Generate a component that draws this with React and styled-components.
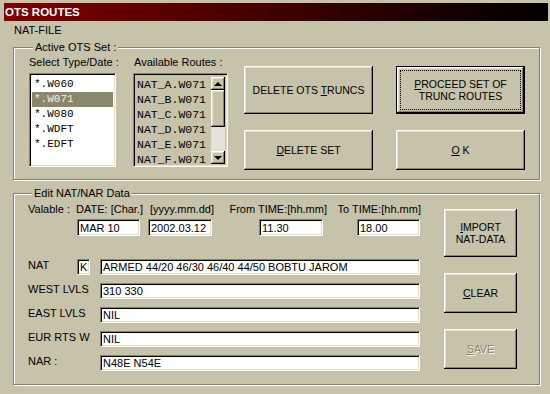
import { Fragment } from 'react'
import styled, { createGlobalStyle } from 'styled-components'

const FACE = '#c6c3aa'
const SHADOW = '#86836c'
const LIGHT = '#e2dfcd'
const UI_FONT = '"Liberation Sans", Arial, sans-serif'

const GlobalStyle = createGlobalStyle`
  * { box-sizing: border-box; }
  body {
    margin: 0;
    background: ${FACE};
    font-family: ${UI_FONT};
  }
`

const Window = styled.div`
  width: 550px;
  height: 394px;
  padding: 3px 2px 0 4px;
  background: ${FACE};
  font-family: ${UI_FONT};
  font-size: 11px;
  color: #000;
`

const TitleBar = styled.div`
  height: 18px;
  display: flex;
  align-items: center;
  padding-left: 1px;
  background: linear-gradient(90deg, #800000, #000);
  color: #fff;
  font: bold 11.5px 'Liberation Sans', Arial, sans-serif;
`

const Body = styled.div`
  padding: 0 7px 0 9px;
`

const Caption = styled.div`
  height: 15px;
  line-height: 15px;
  margin: 2px 0 2px 1px;
`

const GroupBox = styled.fieldset`
  margin: 0 1px 0 0;
  min-width: 0;
  border: 1px solid ${SHADOW};
  box-shadow: inset 1px 1px #fff, 1px 1px #fff;
`

const Legend = styled.legend`
  margin-left: 4px;
  padding: 0 2px;
  line-height: 15px;
  background: ${FACE};
`

const ActiveSet = styled(GroupBox)`
  display: flex;
  align-items: flex-start;
  padding: 0 0 9px 15px;
`

const EditSet = styled(GroupBox)`
  display: flex;
  align-items: flex-start;
  margin-top: 6px;
  padding: 0 0 13px 14px;
`

const ListColumn = styled.div`
  display: flex;
  flex-direction: column;
  width: ${(p) => p.$w}px;
  margin-right: ${(p) => p.$gap || 0}px;
`

const FieldLabel = styled.div`
  height: 15px;
  line-height: 15px;
  margin-bottom: 3px;
  white-space: nowrap;
  padding-left: ${(p) => p.$indent || 0}px;
`

const sunken = `
  border: 1px solid;
  border-color: ${SHADOW} #fff #fff ${SHADOW};
  box-shadow: inset 1px 1px #000, inset -1px -1px ${LIGHT};
`

const ListBox = styled.div`
  ${sunken}
  height: 94px;
  padding: 2px;
  display: flex;
  background: ${(p) => (p.$white ? '#fff' : FACE)};
  font-family: 'Liberation Mono', 'Courier New', monospace;
  font-size: ${(p) => p.$size || 11.5}px;
`

const ListItems = styled.ul`
  flex: 1;
  list-style: none;
  margin: 0;
  padding: 1px 0 0;
`

const ListItem = styled.li`
  height: 15px;
  line-height: 15px;
  padding-left: ${(p) => p.$indent || 2}px;
  white-space: nowrap;
  background: ${(p) => (p.$selected ? '#8b876a' : 'transparent')};
  color: ${(p) => (p.$selected ? '#f2f0e6' : '#000')};
`

const raised = `
  box-shadow: inset -1px -1px #000, inset 1px 1px #fff,
    inset -2px -2px ${SHADOW}, inset 2px 2px ${LIGHT};
`

const ScrollBar = styled.div`
  width: 14px;
  display: flex;
  flex-direction: column;
  padding-top: 1px;
`

const ScrollButton = styled.div`
  ${raised}
  height: 13px;
  background: ${FACE};
  display: flex;
  align-items: center;
  justify-content: center;
`

const Arrow = styled.span`
  width: 0;
  height: 0;
  border-left: 4px solid transparent;
  border-right: 4px solid transparent;
  ${(p) => (p.$down ? 'border-top' : 'border-bottom')}: 4px solid #000;
`

const ScrollThumb = styled.div`
  ${raised}
  height: 37px;
  background: ${FACE};
`

const ScrollTrack = styled.div`
  flex: 1;
  background: #e4e2d6;
`

const ButtonGrid = styled.div`
  display: grid;
  grid-template-columns: 129px 129px;
  grid-template-rows: 48px 40px;
  column-gap: 23px;
  row-gap: 16px;
  margin: 11px 0 0 16px;
`

const Button = styled.button`
  position: relative;
  height: ${(p) => p.$h || 40}px;
  padding: 0 4px;
  border: ${(p) => (p.$default ? '1px solid #000' : 'none')};
  background: ${FACE};
  ${raised}
  font-family: ${UI_FONT};
  font-size: 10.5px;
  line-height: 12px;
  color: ${(p) => (p.$disabled ? SHADOW : '#000')};
  text-shadow: ${(p) => (p.$disabled ? '1px 1px #fff' : 'none')};
  text-transform: uppercase;
  cursor: default;

  &::after {
    content: '';
    display: ${(p) => (p.$default ? 'block' : 'none')};
    position: absolute;
    inset: 3px;
    border: 1px dotted #000;
  }

  u {
    text-decoration-thickness: 1px;
    text-underline-offset: 1px;
  }
`

const FormArea = styled.div`
  display: flex;
  flex-direction: column;
  width: 393px;
`

const DateGrid = styled.div`
  display: grid;
  grid-template-columns: 48px 72px 68px 111px 94px;
  grid-template-rows: 15px 17px;
  row-gap: 2px;
  margin-top: 1px;
`

const HeadLabel = styled.div`
  line-height: 15px;
  white-space: nowrap;
  text-align: ${(p) => p.$align || 'left'};
  padding-left: ${(p) => p.$indent || 0}px;
`

const Field = styled.input`
  ${sunken}
  width: ${(p) => p.$w}px;
  height: ${(p) => p.$h || 16}px;
  margin: 0 ${(p) => p.$right || 0}px 0 ${(p) => p.$left || 0}px;
  justify-self: ${(p) => p.$justify || 'start'};
  padding: 0 1px 0 2px;
  background: #fff;
  font-family: ${UI_FONT};
  font-size: 11px;
  color: #000;
  outline: none;
`

const DataGrid = styled.div`
  display: grid;
  grid-template-columns: 49px 23px 320px;
  grid-auto-rows: 16px;
  row-gap: 8px;
  margin-top: 23px;
`

const RowLabel = styled.div`
  grid-column: ${(p) => (p.$span ? '1 / 3' : '1')};
  line-height: 13px;
  white-space: nowrap;
`

const SideButtons = styled.div`
  display: flex;
  flex-direction: column;
  gap: 16px;
  width: 73px;
  margin: 8px 0 0 23px;
`

const types = ['*.W060', '*.W071', '*.W080', '*.WDFT', '*.EDFT']
const routes = ['A', 'B', 'C', 'D', 'E', 'F'].map((l) => `NAT_${l}.W071`)

const levels = [
  { label: 'WEST LVLS', value: '310 330' },
  { label: 'EAST LVLS', value: 'NIL' },
  { label: 'EUR RTS W', value: 'NIL' },
  { label: 'NAR :', value: 'N48E N54E' },
]

export default function App() {
  return (
    <>
      <GlobalStyle />
      <Window>
        <TitleBar>OTS ROUTES</TitleBar>
        <Body>
          <Caption>NAT-FILE</Caption>

          <ActiveSet>
            <Legend>Active OTS Set :</Legend>
            <ListColumn $w={87} $gap={17}>
              <FieldLabel>Select Type/Date :</FieldLabel>
              <ListBox $white $size={11}>
                <ListItems>
                  {types.map((t) => (
                    <ListItem key={t} $selected={t === '*.W071'}>
                      {t}
                    </ListItem>
                  ))}
                </ListItems>
              </ListBox>
            </ListColumn>
            <ListColumn $w={95}>
              <FieldLabel $indent={1}>Available Routes :</FieldLabel>
              <ListBox>
                <ListItems>
                  {routes.map((r) => (
                    <ListItem key={r} $indent={1}>
                      {r}
                    </ListItem>
                  ))}
                </ListItems>
                <ScrollBar>
                  <ScrollButton>
                    <Arrow />
                  </ScrollButton>
                  <ScrollThumb />
                  <ScrollTrack />
                  <ScrollButton>
                    <Arrow $down />
                  </ScrollButton>
                </ScrollBar>
              </ListBox>
            </ListColumn>
            <ButtonGrid>
              <Button $h={48}>
                DELETE OTS <u>T</u>RUNCS
              </Button>
              <Button $h={48} $default>
                <u>P</u>ROCEED SET OF
                <br />
                TRUNC ROUTES
              </Button>
              <Button>
                <u>D</u>ELETE SET
              </Button>
              <Button>
                <u>O</u>&nbsp;K
              </Button>
            </ButtonGrid>
          </ActiveSet>

          <EditSet>
            <Legend>Edit NAT/NAR Data</Legend>
            <FormArea>
              <DateGrid>
                <HeadLabel>Valable :</HeadLabel>
                <HeadLabel>DATE: [Char.]</HeadLabel>
                <HeadLabel $indent={2}>[yyyy.mm.dd]</HeadLabel>
                <HeadLabel $align="right">From TIME:[hh.mm]</HeadLabel>
                <HeadLabel $align="right">To TIME:[hh.mm]</HeadLabel>
                <span />
                <Field $w={63} $h={17} $left={1} defaultValue="MAR 10" />
                <Field $w={64} $h={17} defaultValue="2002.03.12" />
                <Field $w={64} $h={17} $justify="end" $right={4} defaultValue="11.30" />
                <Field $w={63} $h={17} $justify="end" $right={1} defaultValue="18.00" />
              </DateGrid>
              <DataGrid>
                <RowLabel>NAT</RowLabel>
                <Field $w={13} defaultValue="K" />
                <Field
                  $w={320}
                  defaultValue="ARMED 44/20 46/30 46/40 44/50 BOBTU JAROM"
                />
                {levels.map((row) => (
                  <Fragment key={row.label}>
                    <RowLabel $span>{row.label}</RowLabel>
                    <Field $w={320} defaultValue={row.value} />
                  </Fragment>
                ))}
              </DataGrid>
            </FormArea>
            <SideButtons>
              <Button $h={48}>
                <u>I</u>MPORT
                <br />
                NAT-DATA
              </Button>
              <Button>
                <u>C</u>LEAR
              </Button>
              <Button $disabled>
                <u>S</u>AVE
              </Button>
            </SideButtons>
          </EditSet>
        </Body>
      </Window>
    </>
  )
}
